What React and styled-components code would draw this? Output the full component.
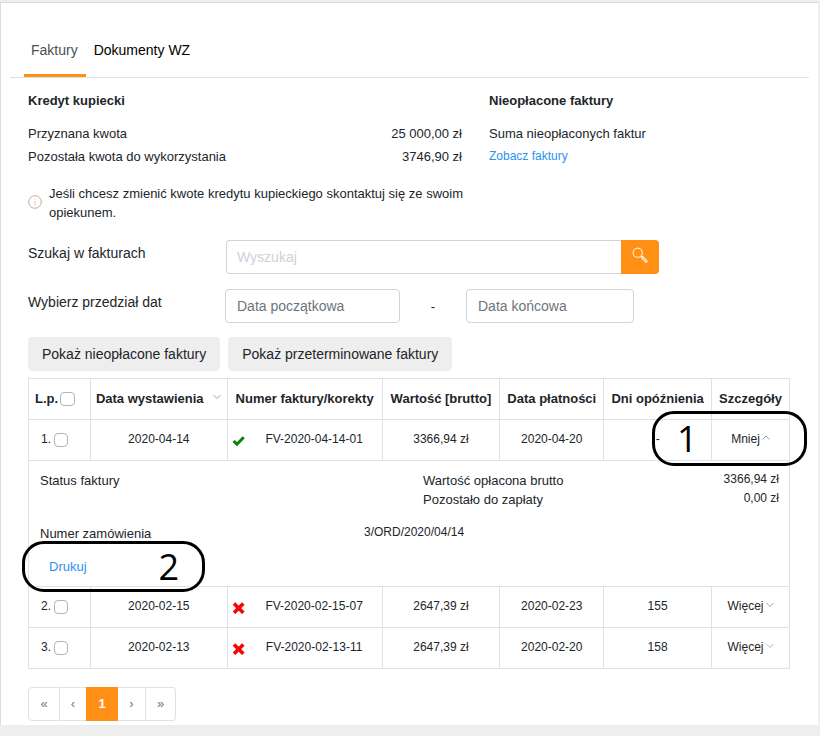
import React, { useState } from "react";
import styled, { createGlobalStyle, css } from "styled-components";

const line = "#dee2e6";
const orange = "#ff9015";
const blue = "#2b93f0";

const GlobalStyle = createGlobalStyle`
  *, *::before, *::after { box-sizing: border-box; }
  body {
    margin: 0;
    background: #eeeeee;
    color: #212529;
    font: 13px/19px "Liberation Sans", Arial, sans-serif;
  }
  button, input { font-family: inherit; color: inherit; margin: 0; }
  button { cursor: pointer; }
  a { color: ${blue}; text-decoration: none; }
`;

const Page = styled.div`
  padding: 2px 2px 11px 0;
`;

const Card = styled.main`
  background: #fff;
  border: solid #dadbe4;
  border-width: 1px 0 0 1px;
  padding: 24px 9px 4px;
`;

const Tabs = styled.nav`
  display: flex;
  gap: 1px;
  padding-left: 14px;
  border-bottom: 1px solid ${line};
`;

const Tab = styled.a`
  padding: 13px 8px 14px 7px;
  border-bottom: 3px solid ${(p) => (p.$active ? orange : "transparent")};
  color: ${(p) => (p.$active ? "#495057" : "#000")};
  font-size: 14px;
  line-height: 20px;
`;

const Content = styled.div`
  padding: 13px 19px 0 18px;
`;

const Summary = styled.section`
  display: grid;
  grid-template-columns: 435fr 301fr;
  column-gap: 26px;
`;

const Heading = styled.h2`
  margin: 0 0 12px;
  font-size: 13px;
  line-height: 19px;
`;

const SummaryLine = styled.div`
  display: flex;
  justify-content: space-between;
  padding-right: 1px;
  line-height: 23px;
`;

const SmallLink = styled.a`
  display: block;
  font-size: 12px;
  line-height: 22px;
`;

const Note = styled.p`
  display: flex;
  align-items: center;
  gap: 7px;
  margin: 16px 0 0;
`;

const InfoSvg = styled.svg`
  flex: none;
  margin-bottom: 3px;
`;

const Field = styled.div`
  display: grid;
  grid-template-columns: 197px 1fr;
  margin-top: ${(p) => (p.$first ? 18 : 15)}px;
`;

const FieldLabel = styled.label`
  padding-top: 3px;
  font-size: 14px;
  line-height: 20px;
`;

const inputBox = css`
  height: 34px;
  min-width: 0;
  padding: 0 11px;
  border: 1px solid #ced4da;
  border-radius: 4px;
  background: #fff;
  font-size: 14px;
  outline: 0;
`;

const SearchGroup = styled.div`
  display: grid;
  grid-template-columns: 396fr 38px 131fr;
  padding-left: 1px;
`;

const SearchInput = styled.input`
  ${inputBox}
  padding-left: 10px;
  border-right: 0;
  border-radius: 4px 0 0 4px;
  &::placeholder { color: #ccd2d9; opacity: 1; }
`;

const SearchButton = styled.button`
  height: 34px;
  padding: 0 0 4px;
  border: 0;
  border-radius: 0 4px 4px 0;
  background: ${orange};
  display: flex;
  align-items: center;
  justify-content: center;
`;

const DateRange = styled.div`
  display: grid;
  grid-template-columns: 175fr 66fr 168fr 156fr;
  align-items: center;
  text-align: center;
`;

const DateInput = styled.input`
  ${inputBox}
  width: 100%;
  &::placeholder { color: #6c757d; opacity: 1; }
`;

const Filters = styled.div`
  display: flex;
  gap: 8px;
  margin: 14px 0 7px;
`;

const FilterButton = styled.button`
  height: 34px;
  padding: 0 14px;
  border: 0;
  border-radius: 4px;
  background: #eeeeee;
  font-size: 14px;
`;

const Table = styled.table`
  width: 100%;
  table-layout: fixed;
  border-collapse: collapse;
`;

const Col = styled.col`
  width: ${(p) => p.$w}%;
`;

const Th = styled.th`
  height: 41px;
  padding: 0 0 2px;
  border: 1px solid ${line};
  font-size: 13px;
  white-space: nowrap;
`;

const Td = styled.td`
  position: relative;
  height: 41px;
  padding: 0 0 2px;
  border: 1px solid ${line};
  font-size: 12px;
  line-height: 17px;
  text-align: center;
  white-space: nowrap;
`;

const Pick = styled.label`
  display: flex;
  align-items: center;
  gap: ${(p) => (p.$head ? 2 : 3)}px;
  padding-left: ${(p) => (p.$head ? 6 : 12)}px;
`;

const Tick = styled.input`
  appearance: none;
  width: ${(p) => (p.$head ? 15 : 14)}px;
  height: 14px;
  border: 1px solid #adb5bd;
  border-radius: 4px;
  background: #fff;
  &:checked { background: ${orange}; }
`;

const TickSlot = styled.span`
  display: flex;
  padding-top: 2px;
`;

const SortButton = styled.button`
  display: flex;
  width: 100%;
  justify-content: space-between;
  align-items: center;
  padding: 0 6px 0 5px;
  border: 0;
  background: none;
  font-size: 13px;
  font-weight: bold;
`;

const Invoice = styled.div`
  display: grid;
  grid-template-columns: 22px 1fr 3px;
  align-items: center;
`;

const StateSvg = styled.svg`
  margin: 3px 0 0 4px;
`;

const Toggle = styled.button`
  display: inline-flex;
  align-items: center;
  gap: 2px;
  padding: 0;
  border: 0;
  background: none;
  font-size: 12px;
  line-height: 17px;
`;

const ChevronSvg = styled.svg`
  margin-bottom: 3px;
`;

const DetailsCell = styled.td`
  position: relative;
  padding: 10px 10px 9px 11px;
  border: 1px solid ${line};
`;

const Details = styled.div`
  display: grid;
  grid-template-columns: 383fr 356fr;
  row-gap: 15px;
`;

const Amounts = styled.dl`
  display: grid;
  grid-template-columns: 1fr auto;
  margin: 0;
`;

const Term = styled.dt``;

const Amount = styled.dd`
  margin: 0;
  font-size: 12px;
  line-height: 16px;
  text-align: right;
`;

const OrderLine = styled.div`
  grid-column: 1 / -1;
  display: grid;
  grid-template-columns: 324fr 415fr;
`;

const OrderNumber = styled.span`
  font-size: 12px;
  line-height: 16px;
`;

const PrintButton = styled.button`
  display: block;
  margin: 14px 0 0 9px;
  padding: 0;
  border: 0;
  background: none;
  color: ${blue};
  font-size: 13px;
  line-height: 20px;
`;

const Marker = styled.div`
  position: absolute;
  z-index: 2;
  display: flex;
  align-items: center;
  border: 3px solid #000;
  border-radius: 22px;
  color: #000;
  font: 36px/44px "Open Sans", "Noto Sans", sans-serif;
  pointer-events: none;
`;

const ToggleMarker = styled(Marker)`
  top: -9px;
  right: -18px;
  width: 155px;
  height: 55px;
  padding-left: 22px;
`;

const PrintMarker = styled(Marker)`
  bottom: -6px;
  left: -7px;
  width: 183px;
  height: 51px;
  justify-content: flex-end;
  padding-right: 23px;
`;

const Pager = styled.nav`
  display: flex;
  margin-top: 18px;
`;

const PageButton = styled.button`
  width: ${(p) => p.$w}px;
  height: 34px;
  padding: 0 0 2px;
  border: 1px solid ${(p) => (p.$active ? orange : line)};
  border-left-width: ${(p) => (p.$first || p.$active ? 1 : 0)}px;
  border-right-width: ${(p) => (p.$beforeActive ? 0 : 1)}px;
  border-radius: ${(p) => (p.$first ? "4px 0 0 4px" : p.$last ? "0 4px 4px 0" : "0")};
  background: ${(p) => (p.$active ? orange : "#fff")};
  color: ${(p) => (p.$active ? "#fff" : "#6c757d")};
  font-size: 13px;
  font-weight: ${(p) => (p.$active ? "bold" : "normal")};
`;

const Chevron = ({ up, tone = "#9aa2ab" }) => (
  <ChevronSvg width="8" height="6" viewBox="0 0 8 6" fill="none" stroke={tone} aria-hidden="true">
    <path d={up ? "M.5 4.5 4 1 7.5 4.5" : "M.5 1 4 4.5 7.5 1"} />
  </ChevronSvg>
);

const InfoIcon = () => (
  <InfoSvg width="14" height="14" viewBox="0 0 14 14" fill="none" aria-hidden="true">
    <circle cx="7" cy="7" r="6.3" stroke="#c3a9a0" strokeWidth="1" />
    <path d="M7 6v4.3M7 3.7v1" stroke="#efb9a6" />
  </InfoSvg>
);

const SearchIcon = () => (
  <svg width="16" height="16" viewBox="0 0 16 16" fill="none" stroke="#fff0dc" aria-hidden="true">
    <circle cx="5.7" cy="5.7" r="4.6" strokeWidth="1.1" />
    <path d="m9 9 1.5 1.5" strokeWidth="1.2" />
    <path d="m10.5 10.5 3.7 3.7" strokeWidth="3" strokeLinecap="round" />
    <path d="m10.7 10.7 3.3 3.3" stroke="#ffb562" strokeWidth="1" strokeLinecap="round" />
  </svg>
);

const PaidIcon = () => (
  <StateSvg width="13" height="12" viewBox="0 0 13 12" role="img" aria-label="Opłacona">
    <path d="M1.5 6 5 9.2 11.7 2.2" fill="none" stroke="#078207" strokeWidth="3" />
  </StateSvg>
);

const UnpaidIcon = () => (
  <StateSvg width="13" height="12" viewBox="0 0 13 12" role="img" aria-label="Nieopłacona">
    <path d="m2 1.5 9.3 9.3M11.3 1.5 2 10.8" fill="none" stroke="#f50505" strokeWidth="3.6" />
  </StateSvg>
);

const columns = [62, 137, 155, 118, 104, 108, 78];
const headers = ["Numer faktury/korekty", "Wartość [brutto]", "Data płatności", "Dni opóźnienia", "Szczegóły"];

const invoices = [
  { issued: "2020-04-14", number: "FV-2020-04-14-01", value: "3366,94 zł", due: "2020-04-20", late: "-", paid: true, order: "3/ORD/2020/04/14" },
  { issued: "2020-02-15", number: "FV-2020-02-15-07", value: "2647,39 zł", due: "2020-02-23", late: "155" },
  { issued: "2020-02-13", number: "FV-2020-02-13-11", value: "2647,39 zł", due: "2020-02-20", late: "158", tone: "#d5ac92" },
];

function InvoiceRows({ invoice, index }) {
  const [open, setOpen] = useState(Boolean(invoice.order));
  return (
    <>
      <tr>
        <Td>
          <Pick>
            {index + 1}.
            <TickSlot><Tick type="checkbox" aria-label={`Zaznacz ${invoice.number}`} /></TickSlot>
          </Pick>
        </Td>
        <Td>{invoice.issued}</Td>
        <Td>
          <Invoice>
            {invoice.paid ? <PaidIcon /> : <UnpaidIcon />}
            <span>{invoice.number}</span>
          </Invoice>
        </Td>
        <Td>{invoice.value}</Td>
        <Td>{invoice.due}</Td>
        <Td>{invoice.late}</Td>
        <Td>
          <Toggle type="button" aria-expanded={open} onClick={() => setOpen(!open)}>
            {open ? "Mniej" : "Więcej"}
            <Chevron up={open} tone={invoice.tone} />
          </Toggle>
          {invoice.order && <ToggleMarker>1</ToggleMarker>}
        </Td>
      </tr>
      {open && invoice.order && (
        <tr>
          <DetailsCell colSpan={7}>
            <Details>
              <span>Status faktury</span>
              <Amounts>
                <Term>Wartość opłacona brutto</Term>
                <Amount>{invoice.value}</Amount>
                <Term>Pozostało do zapłaty</Term>
                <Amount>0,00 zł</Amount>
              </Amounts>
              <OrderLine>
                <span>Numer zamówienia</span>
                <OrderNumber>{invoice.order}</OrderNumber>
              </OrderLine>
            </Details>
            <PrintButton type="button">Drukuj</PrintButton>
            <PrintMarker>2</PrintMarker>
          </DetailsCell>
        </tr>
      )}
    </>
  );
}

export default function App() {
  return (
    <>
      <GlobalStyle />
      <Page>
        <Card>
          <Tabs>
            <Tab href="#faktury" $active>Faktury</Tab>
            <Tab href="#dokumenty">Dokumenty WZ</Tab>
          </Tabs>
          <Content>
            <Summary>
              <div>
                <Heading>Kredyt kupiecki</Heading>
                <SummaryLine><span>Przyznana kwota</span><span>25 000,00 zł</span></SummaryLine>
                <SummaryLine><span>Pozostała kwota do wykorzystania</span><span>3746,90 zł</span></SummaryLine>
                <Note>
                  <InfoIcon />
                  <span>Jeśli chcesz zmienić kwote kredytu kupieckiego skontaktuj się ze swoim opiekunem.</span>
                </Note>
              </div>
              <div>
                <Heading>Nieopłacone faktury</Heading>
                <SummaryLine>Suma nieopłaconych faktur</SummaryLine>
                <SmallLink href="#nieoplacone">Zobacz faktury</SmallLink>
              </div>
            </Summary>
            <Field $first>
              <FieldLabel htmlFor="search">Szukaj w fakturach</FieldLabel>
              <SearchGroup>
                <SearchInput id="search" type="text" placeholder="Wyszukaj" />
                <SearchButton type="button" aria-label="Szukaj"><SearchIcon /></SearchButton>
              </SearchGroup>
            </Field>
            <Field>
              <FieldLabel htmlFor="from">Wybierz przedział dat</FieldLabel>
              <DateRange>
                <DateInput id="from" type="text" placeholder="Data początkowa" />
                <span>-</span>
                <DateInput type="text" aria-label="Data końcowa" placeholder="Data końcowa" />
              </DateRange>
            </Field>
            <Filters>
              <FilterButton type="button">Pokaż nieopłacone faktury</FilterButton>
              <FilterButton type="button">Pokaż przeterminowane faktury</FilterButton>
            </Filters>
            <Table>
              <colgroup>
                {columns.map((w, i) => <Col key={i} $w={(w / 762) * 100} />)}
              </colgroup>
              <thead>
                <tr>
                  <Th scope="col">
                    <Pick $head>
                      L.p.
                      <TickSlot><Tick $head type="checkbox" aria-label="Zaznacz wszystkie" /></TickSlot>
                    </Pick>
                  </Th>
                  <Th scope="col">
                    <SortButton type="button">Data wystawienia <Chevron /></SortButton>
                  </Th>
                  {headers.map((h) => <Th scope="col" key={h}>{h}</Th>)}
                </tr>
              </thead>
              <tbody>
                {invoices.map((inv, i) => <InvoiceRows key={inv.number} invoice={inv} index={i} />)}
              </tbody>
            </Table>
            <Pager aria-label="Strony">
              <PageButton type="button" $w={32} $first>«</PageButton>
              <PageButton type="button" $w={26} $beforeActive>‹</PageButton>
              <PageButton type="button" $w={32} $active>1</PageButton>
              <PageButton type="button" $w={28}>›</PageButton>
              <PageButton type="button" $w={30} $last>»</PageButton>
            </Pager>
          </Content>
        </Card>
      </Page>
    </>
  );
}
